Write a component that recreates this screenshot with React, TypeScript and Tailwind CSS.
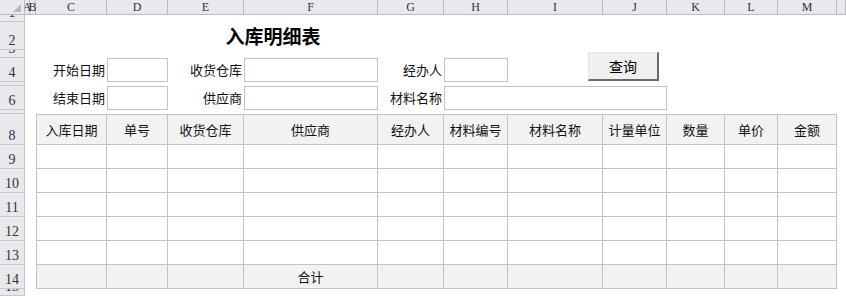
import React from "react";

const cols = ["A", "B", "C", "D", "E", "F", "G", "H", "I", "J", "K", "L", "M", ""];
const heads = ["入库日期", "单号", "收货仓库", "供应商", "经办人", "材料编号", "材料名称", "计量单位", "数量", "单价", "金额"];

const box = "border border-[#c3c3c3] bg-white";
const label = "flex items-center justify-end pr-[2px] text-[13px] text-[#111] whitespace-nowrap";

function RowHead({ n }: { n: number }) {
  return (
    <div className="bg-[#e7e9ec] border-r border-b border-[#c5c8cd] flex items-end justify-center overflow-hidden font-['Liberation_Serif',serif] text-[14px] leading-[14px] text-[#333] pb-[1px]">
      {n}
    </div>
  );
}

function Empty({ n }: { n: number }) {
  return (
    <>
      {Array.from({ length: n }).map((_, i) => (
        <div key={i} />
      ))}
    </>
  );
}

function TableRow({ r, gray, header }: { r: number; gray?: boolean; header?: boolean }) {
  return (
    <>
      <RowHead n={r} />
      <Empty n={2} />
      {heads.map((h, i) => {
        const cls =
          "border-r border-b border-[#c3c3c3] flex items-center justify-center text-[13px] text-[#111] whitespace-nowrap " +
          (gray ? "bg-[#f2f2f2] " : "bg-white ") +
          (i === 0 ? "border-l " : "") +
          (header ? "border-t" : "");
        return (
          <div key={i} className={cls}>
            {header ? h : r === 14 && i === 3 ? "合计" : ""}
          </div>
        );
      })}
      <div />
    </>
  );
}

export default function App() {
  return (
    <div className="relative w-[846px] h-[296px] overflow-hidden bg-white font-['Noto_Sans_CJK_SC','Noto_Sans',sans-serif]">
      <div className="grid grid-cols-[25px_5px_6px_71px_61px_76px_134px_66px_64px_95px_64px_58px_53px_59px_1fr] grid-rows-[15px_7px_28px_8px_24px_4px_24px_4px_31px_24px_24px_24px_24px_24px_24px_7px]">
        {/* column headers */}
        <div className="bg-[#e7e9ec] border-r border-b border-[#b9bdc3] relative">
          <svg width="25" height="15" className="absolute inset-0">
            <polygon points="21,4 21,12 13,12" fill="#b7b9bc" />
          </svg>
        </div>
        {cols.map((c, i) => (
          <div
            key={i}
            className="bg-[#e7e9ec] border-r border-b border-[#b9bdc3] flex items-center justify-center overflow-visible font-['Liberation_Serif',serif] text-[12px] leading-[12px] text-[#333]"
          >
            {c}
          </div>
        ))}

        {/* row 1 */}
        <RowHead n={1} />
        <Empty n={14} />

        {/* row 2 */}
        <RowHead n={2} />
        <Empty n={4} />
        <div className="col-span-2 flex items-center justify-center text-[19px] font-bold text-black">入库明细表</div>
        <Empty n={8} />

        {/* row 3 */}
        <RowHead n={3} />
        <Empty n={14} />

        {/* row 4 */}
        <RowHead n={4} />
        <Empty n={2} />
        <div className={label}>开始日期</div>
        <div className={box} />
        <div className={label}>收货仓库</div>
        <div className={box} />
        <div className={label}>经办人</div>
        <div className={box} />
        <Empty n={6} />

        {/* row 5 */}
        <RowHead n={5} />
        <Empty n={14} />

        {/* row 6 */}
        <RowHead n={6} />
        <Empty n={2} />
        <div className={label}>结束日期</div>
        <div className={box} />
        <div className={label}>供应商</div>
        <div className={box} />
        <div className={label}>材料名称</div>
        <div className={box + " col-span-3"} />
        <Empty n={4} />

        {/* row 7 */}
        <RowHead n={7} />
        <Empty n={14} />

        <TableRow r={8} gray header />
        <TableRow r={9} />
        <TableRow r={10} />
        <TableRow r={11} />
        <TableRow r={12} />
        <TableRow r={13} />
        <TableRow r={14} gray />

        {/* row 15 */}
        <RowHead n={15} />
        <Empty n={14} />
      </div>

      {/* query button floating over the sheet */}
      <button className="absolute left-[588px] top-[52px] w-[71px] h-[29px] bg-[#f0f0f0] border border-t-[#e3e3e3] border-l-[#e3e3e3] border-r-2 border-b-2 border-r-[#6a6a6a] border-b-[#6a6a6a] flex items-center justify-center text-[14px] text-black">
        查询
      </button>
    </div>
  );
}
